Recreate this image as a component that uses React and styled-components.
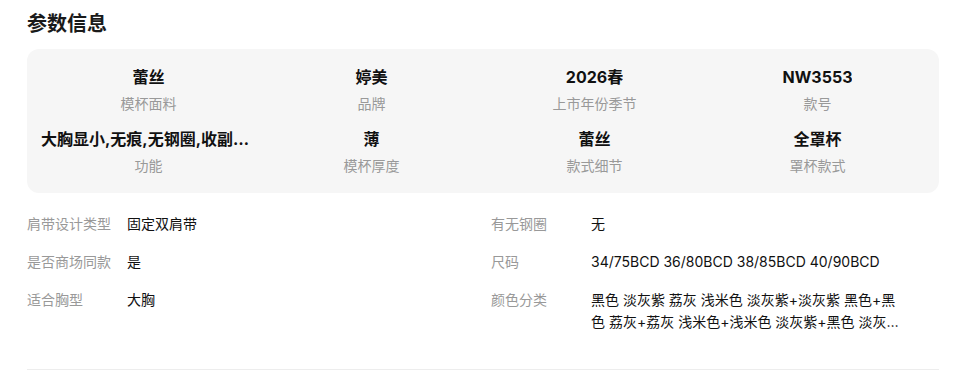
import React from "react";
import styled, { createGlobalStyle } from "styled-components";

const GlobalStyle = createGlobalStyle`
  body {
    margin: 0;
    background: #fff;
    font-family: Inter, "Noto Sans CJK SC", sans-serif;
    color: #111;
  }
`;

const highlights = [
  { value: "蕾丝", label: "模杯面料" },
  { value: "婷美", label: "品牌" },
  { value: "2026春", label: "上市年份季节" },
  { value: "NW3553", label: "款号" },
  { value: "大胸显小,无痕,无钢圈,收副乳,聚拢", label: "功能" },
  { value: "薄", label: "模杯厚度" },
  { value: "蕾丝", label: "款式细节" },
  { value: "全罩杯", label: "罩杯款式" },
];

const leftRows = [
  { label: "肩带设计类型", value: "固定双肩带" },
  { label: "是否商场同款", value: "是" },
  { label: "适合胸型", value: "大胸" },
];

const rightRows = [
  { label: "有无钢圈", value: "无" },
  { label: "尺码", value: "34/75BCD 36/80BCD 38/85BCD 40/90BCD" },
  {
    label: "颜色分类",
    value:
      "黑色 淡灰紫 荔灰 浅米色 淡灰紫+淡灰紫 黑色+黑色 荔灰+荔灰 浅米色+浅米色 淡灰紫+黑色 淡灰紫+浅米色 黑色+荔灰",
  },
];

function ParamSection() {
  return (
    <Section>
      <Title>参数信息</Title>
      <HighlightCard>
        {highlights.map((item, i) => (
          <HighlightItem key={i}>
            <HighlightValue>{item.value}</HighlightValue>
            <HighlightLabel>{item.label}</HighlightLabel>
          </HighlightItem>
        ))}
      </HighlightCard>
      <DetailGrid>
        <DetailColumn>
          {leftRows.map((row) => (
            <DetailRow key={row.label}>
              <DetailLabel>{row.label}</DetailLabel>
              <DetailValue>{row.value}</DetailValue>
            </DetailRow>
          ))}
        </DetailColumn>
        <DetailColumn>
          {rightRows.map((row) => (
            <DetailRow key={row.label}>
              <DetailLabel>{row.label}</DetailLabel>
              <DetailValue>{row.value}</DetailValue>
            </DetailRow>
          ))}
        </DetailColumn>
      </DetailGrid>
      <Divider />
    </Section>
  );
}

export default function App() {
  return (
    <>
      <GlobalStyle />
      <ParamSection />
    </>
  );
}

const Section = styled.div`
  width: 912px;
  padding: 10px 0 0 27px;
`;

const Title = styled.h2`
  margin: 0 0 11px;
  font-size: 20px;
  line-height: 28px;
  font-weight: 700;
  color: #1a1a1a;
`;

const HighlightCard = styled.div`
  display: grid;
  grid-template-columns: repeat(4, 1fr);
  row-gap: 12px;
  padding: 16px 10px;
  background: #f6f6f6;
  border-radius: 12px;
`;

const HighlightItem = styled.div`
  display: flex;
  flex-direction: column;
  align-items: center;
  gap: 4px;
  padding: 0 4px;
  min-width: 0;
`;

const HighlightValue = styled.div`
  max-width: 100%;
  font-size: 16px;
  line-height: 24px;
  font-weight: 700;
  color: #111;
  white-space: nowrap;
  overflow: hidden;
  text-overflow: ellipsis;
`;

const HighlightLabel = styled.div`
  font-size: 14px;
  line-height: 22px;
  color: #999;
`;

const DetailGrid = styled.div`
  display: grid;
  grid-template-columns: 1fr 1fr;
  column-gap: 16px;
  padding: 20px 0 36px;
`;

const DetailColumn = styled.div`
  display: flex;
  flex-direction: column;
  gap: 16px;
`;

const DetailRow = styled.div`
  display: flex;
  align-items: flex-start;
  font-size: 14px;
  line-height: 22px;
`;

const DetailLabel = styled.div`
  flex: 0 0 100px;
  color: #999;
`;

const DetailValue = styled.div`
  width: 316px;
  color: #111;
  display: -webkit-box;
  -webkit-box-orient: vertical;
  -webkit-line-clamp: 2;
  overflow: hidden;
`;

const Divider = styled.div`
  height: 1px;
  background: #ededed;
`;
